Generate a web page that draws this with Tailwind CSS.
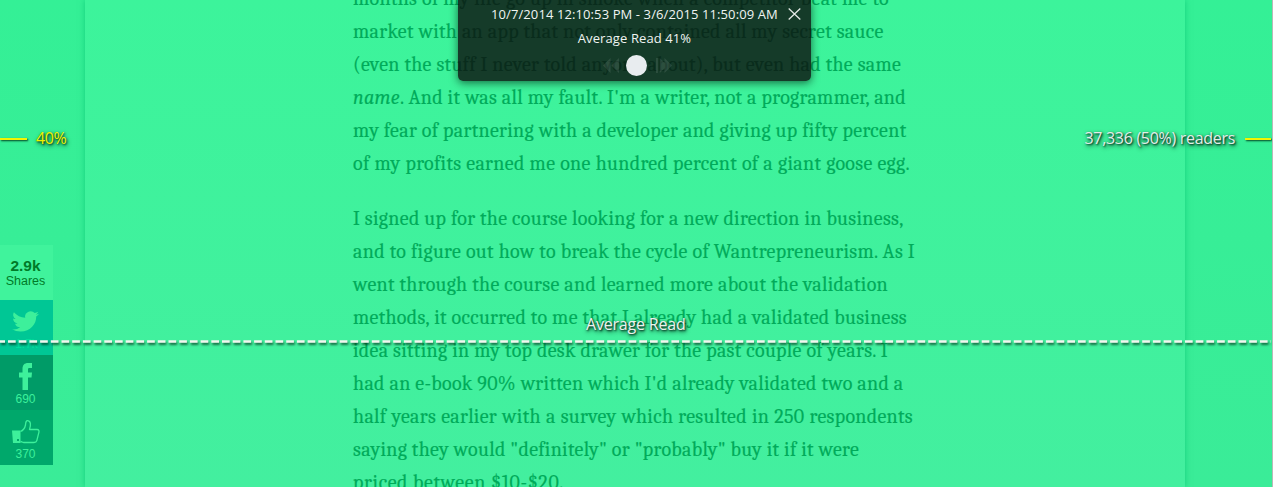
<!DOCTYPE html>
<html lang="en">
<head>
<meta charset="utf-8">
<title>Average Read</title>
<script src="https://cdn.jsdelivr.net/npm/@tailwindcss/browser@4"></script>
</head>
<body class="relative h-[487px] w-[1273px] overflow-hidden bg-linear-to-b from-[#34f096] to-[#3aec98] font-['Open_Sans',sans-serif]">
<main class="mx-auto ml-[85px] h-[487px] w-[1100px] overflow-hidden bg-linear-to-b from-[#3cf49b] to-[#43ef9f] pl-[268px] shadow-[0_0_6px_rgba(0,190,110,0.65)]">
  <article class="-mt-[18px] text-[20px] leading-[33px] tracking-[0.3px] whitespace-nowrap text-[#00ab5a] font-['Cambria','Caladea','Liberation_Serif',serif] [-webkit-text-stroke:0.15px_#00ab5a]">
    <p class="mb-[22px] [&>span]:block [&>span]:[text-align-last:justify]">
      <span class="w-[536px]">months of my life go up in smoke when a competitor beat me to</span>
      <span class="w-[529px]">market with an app that not only contained all my secret sauce</span>
      <span class="w-[548px]">(even the stuff I never told anyone about), but even had the same</span>
      <span class="w-[553px]"><i>name</i>. And it was all my fault. I'm a writer, not a programmer, and</span>
      <span class="w-[553px]">my fear of partnering with a developer and giving up fifty percent</span>
      <span class="w-[557px]">of my profits earned me one hundred percent of a giant goose egg.</span>
    </p>
    <p class="[&>span]:block [&>span]:[text-align-last:justify]">
      <span class="w-[549px]">I signed up for the course looking for a new direction in business,</span>
      <span class="w-[562px]">and to figure out how to break the cycle of Wantrepreneurism. As I</span>
      <span class="w-[535px]">went through the course and learned more about the validation</span>
      <span class="w-[554px]">methods, it occurred to me that I already had a validated business</span>
      <span class="w-[535px]">idea sitting in my top desk drawer for the past couple of years. I</span>
      <span class="w-[550px]">had an e-book 90% written which I'd already validated two and a</span>
      <span class="w-[560px]">half years earlier with a survey which resulted in 250 respondents</span>
      <span class="w-[505px]">saying they would "definitely" or "probably" buy it if it were</span>
      <span class="w-[211px] tracking-[0.6px]">priced between $10-$20.</span>
    </p>
  </article>
</main>

<aside class="absolute top-[245px] left-0 w-[53px] text-center text-[12px] leading-[14px] text-[#3df09b] font-['Liberation_Sans',sans-serif]">
  <div class="h-[55px] bg-[#40f39c] pt-[13px] text-[#007b28]">
    <div class="pr-[2px] text-[15.500px] leading-[16px] font-bold">2.9k</div>
    <div class="pr-[2px] text-[12.500px]">Shares</div>
  </div>
  <div class="h-[55px] bg-[#00c795] pt-[9px]">
    <svg class="ml-[12px] h-[25px] w-[27px]" viewBox="0 0 24 24" preserveAspectRatio="none" fill="currentColor"><path d="M24 4.6a10 10 0 0 1-2.800.8 5 5 0 0 0 2.100-2.700 10 10 0 0 1-3.100 1.200 4.900 4.900 0 0 0-8.400 4.500A14 14 0 0 1 1.700 3.200a4.900 4.900 0 0 0 1.500 6.500 5 5 0 0 1-2.200-.6v.1a4.900 4.900 0 0 0 3.900 4.800 5 5 0 0 1-2.200.1 4.900 4.900 0 0 0 4.600 3.400A9.900 9.900 0 0 1 0 19.500 14 14 0 0 0 7.500 21.700c9.100 0 14-7.500 14-14v-.6A10 10 0 0 0 24 4.600z"/></svg>
    <div class="mt-[3px] text-[#00de9c]">1.7k</div>
  </div>
  <div class="h-[55px] bg-[#009b67] pt-[8px]">
    <svg class="ml-[19px] h-[27px] w-[14px]" viewBox="0 0 14 27" fill="currentColor"><path d="M3.500 27V14.500H0V9.500h3.500V6C3.500 2 5.500 0 9 0h4v5h-2.500C9.200 5 9 5.600 9 6.800v2.700h4l-.5 5H9V27z"/></svg>
    <div class="mt-[2px] pr-[2px]">690</div>
  </div>
  <div class="h-[55px] bg-[#00a86b] pt-[9px]">
    <svg class="ml-[12px] h-[26px] w-[28px]" viewBox="0 0 28 26" fill="none" stroke="currentColor" stroke-width="1.300" stroke-linejoin="round"><path fill="currentColor" stroke="none" fill-rule="evenodd" d="M0 11.500h8.500V24H1zm5 8.500v2h2v-2z"/><path d="M8.500 12.500c2.500-1 4.500-4 5-6.500.2-3 .8-4.500 2.200-4.300C19 2.200 19 6 17.500 10.500H25c2 0 2.300 1.500 1.800 3.200l-2 8c-.4 1.500-1.300 1.800-2.800 1.800H12c-1.500 0-2-.8-3.500-1"/></svg>
    <div class="mt-[2px] pr-[2px]">370</div>
  </div>
</aside>

<svg class="absolute top-[338px] left-0 h-[8px] w-[1271px] drop-shadow-[1px_2px_1px_rgba(0,40,20,0.75)]" viewBox="0 0 1271 8"><path d="M-2.700 3.500H1271" stroke="#f1f6ee" stroke-width="2.600" stroke-dasharray="7.700 3"/></svg>
<div class="absolute top-[314px] left-[586px] text-[16px] leading-[21px] tracking-[-0.2px] whitespace-nowrap text-[#edf2ee] [text-shadow:1px_1px_2px_#002818,1px_2px_4px_#003820]">Average Read</div>

<div class="absolute top-[127px] left-0 flex h-[22px] items-center text-[16px] tracking-[-0.4px] text-[#eff200] [text-shadow:1px_1px_2px_#003c1c,1px_2px_4px_#004c24]">
  <span class="mt-px mr-[9px] h-[2px] w-[27px] bg-[#f5f500] shadow-[1px_1px_2px_#003c1c]"></span>40%
</div>
<div class="absolute top-[127px] right-[2px] flex h-[22px] items-center text-[16px] tracking-[-0.3px] whitespace-nowrap text-[#e4eee8] [text-shadow:1px_1px_2px_#002818,1px_2px_4px_#003820]">
  37,336 (50%) readers<span class="mt-px ml-[10px] h-[2px] w-[26px] bg-[#f5f500] shadow-[1px_1px_2px_#003c1c]"></span>
</div>

<section class="absolute top-0 left-[458px] h-[81px] w-[353px] rounded-b-[5px] bg-[#0b0c0c]/80 text-center text-[13px] leading-[18px] text-[#f0f4f2] shadow-[0_2px_8px_rgba(0,40,20,0.65)]">
  <div class="flex h-[28px] items-center pl-[33px] whitespace-nowrap"><span class="tracking-[0.1px]">10/7/2014 12:10:53 PM - 3/6/2015 11:50:09 AM</span>
    <svg class="ml-[10px] h-[12px] w-[13px]" viewBox="0 0 13 12" stroke="#e3e8e5" stroke-width="1.300"><path d="M.7.5l11.600 11M12.300.5L.7 11.500"/></svg>
  </div>
  <div class="mt-[1px] tracking-[0.1px]">Average Read 41%</div>
  <div class="mt-[8px] flex items-center justify-center gap-[7px] pl-[6px] text-white/10">
    <svg class="h-[15px] w-[16px]" viewBox="0 0 17 16" fill="currentColor"><path d="M8 0v16L0 8zM17 0v16L9 8z"/></svg>
    <span class="size-[21px] rounded-full bg-[#e8ecef]"></span>
    <svg class="ml-[2px] h-[15px] w-[16px]" viewBox="0 0 17 16" fill="currentColor"><path d="M0 0h2v16H0zM4 0l5 5V0l8 8-8 8v-5l-5 5z"/></svg>
  </div>
</section>
<div class="absolute top-0 right-0 h-full w-px bg-[#b8b8b8]"></div>
</body>
</html>
